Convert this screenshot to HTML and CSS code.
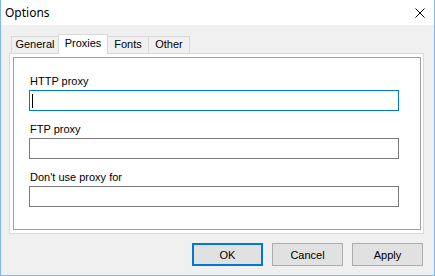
FILE: index.html
```html
<!DOCTYPE html>
<html lang="en">
<head>
  <meta charset="UTF-8">
  <title>Options</title>
  <link rel="stylesheet" href="styles.css">
</head>
<body>
  <div class="window">
    <div class="titlebar">
      <span class="title">Options</span>
      <svg class="close" width="10" height="10" viewBox="0 0 10 10">
        <path d="M0.5 0.5L9.5 9.5M9.5 0.5L0.5 9.5" stroke="#000" stroke-width="1" fill="none"/>
      </svg>
    </div>
    <div class="content">
      <div class="tabs">
        <div class="tab tab-general">General</div>
        <div class="tab tab-active">Proxies</div>
        <div class="tab tab-fonts">Fonts</div>
        <div class="tab tab-other">Other</div>
      </div>
      <div class="panel">
        <div class="group">
          <div class="field">
            <label>HTTP proxy</label>
            <div class="textbox focused"><span class="caret"></span></div>
          </div>
          <div class="field">
            <label>FTP proxy</label>
            <div class="textbox"></div>
          </div>
          <div class="field">
            <label>Don't use proxy for</label>
            <div class="textbox"></div>
          </div>
        </div>
      </div>
      <div class="buttons">
        <button class="btn btn-default">OK</button>
        <button class="btn">Cancel</button>
        <button class="btn">Apply</button>
      </div>
    </div>
  </div>
</body>
</html>
```

FILE: styles.css
```css
:root {
  --face: #f0f0f0;
  --frame: #80b6ee;
  --tab-border: #d9d9d9;
  --group-border: #a0a0a0;
  --edit-border: #7a7a7a;
  --focus: #0078d7;
}
*, *::before, *::after { box-sizing: border-box; margin: 0; padding: 0; }
body {
  font-family: "Liberation Sans", Arial, sans-serif;
  font-size: 11px;
  color: #000;
  background: #fff;
}
.window {
  width: 435px;
  height: 276px;
  background: var(--face);
  border: 1px solid var(--frame);
  border-top: none;
  display: flex;
  flex-direction: column;
}
.titlebar {
  height: 25px;
  background: #fff;
  display: flex;
  align-items: center;
  justify-content: space-between;
  padding: 0 9px 0 4px;
}
.title {
  font-family: "Noto Sans", "Segoe UI", sans-serif;
  font-size: 12px;
  line-height: 16px;
}
.content {
  padding: 9px 10px 0 8px;
}
.tabs {
  display: flex;
  align-items: flex-end;
  padding-left: 2px;
  height: 20px;
  margin-bottom: -1px;
  position: relative;
  z-index: 1;
}
.tab {
  height: 17px;
  line-height: 15px;
  border: 1px solid var(--tab-border);
  border-bottom: none;
  background: var(--face);
  text-align: center;
  margin-bottom: 1px;
}
.tab-general { width: 48px; }
.tab-fonts { width: 41px; border-left: none; }
.tab-other { width: 41px; border-left: none; }
.tab-active {
  width: 50px;
  height: 20px;
  line-height: 17px;
  background: #fff;
  margin: 0 0 0 -1px;
}
.panel {
  height: 181px;
  background: #fff;
  border: 1px solid var(--tab-border);
  padding: 3px 2px 3px 3px;
}
.group {
  height: 100%;
  border: 1px solid var(--group-border);
  padding: 17px 21px 0 15px;
  display: flex;
  flex-direction: column;
  gap: 12px;
}
.field label {
  display: block;
  line-height: 13px;
  margin-bottom: 2px;
  padding-left: 1px;
}
.textbox {
  height: 21px;
  background: #fff;
  border: 1px solid var(--edit-border);
  display: flex;
  align-items: center;
  padding-left: 2px;
}
.textbox.focused {
  border-color: var(--focus);
}
.caret {
  width: 1px;
  height: 14px;
  background: #000;
}
.buttons {
  display: flex;
  justify-content: flex-end;
  gap: 9px;
  padding: 9px 1px 0 0;
}
.btn {
  width: 71px;
  height: 23px;
  font-family: inherit;
  font-size: 11px;
  color: #000;
  background: #e1e1e1;
  border: 1px solid #adadad;
}
.btn-default {
  border: 2px solid var(--focus);
}
```
